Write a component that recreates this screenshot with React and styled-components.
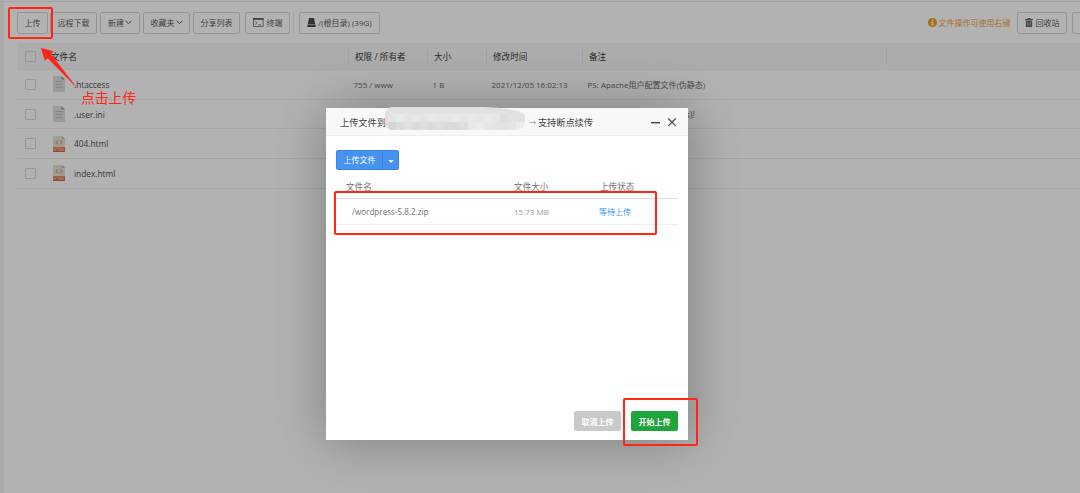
import React from "react";
import styled, { createGlobalStyle } from "styled-components";

const files = [
  {
    name: ".htaccess",
    type: "txt",
    owner: "755 / www",
    size: "1 B",
    time: "2021/12/05 16:02:13",
    note: "PS: Apache用户配置文件(伪静态)",
  },
  { name: ".user.ini", type: "txt", tail: "s)!" },
  { name: "404.html", type: "html" },
  { name: "index.html", type: "html" },
];

const mosaic = [
  "#e5e5e5", "#e9e9e9", "#e4e4e4", "#e7e7e7", "#e4e4e4", "#e8e8e8", "#e6e6e6", "#e6e6e6", "#e9e9e9", "#e5e5e5", "#e8e8e8", "#e6e6e6", "#e9e9e9", "#e5e5e5", "#dedede", "#e3e3e3", "#e2e2e2",
  "#d6d6d6", "#dcdcdc", "#e1e1e1", "#dcdcdc", "#dfdfdf", "#dbdbdb", "#dddddd", "#dadada", "#dadada", "#dddddd", "#e9e9e9", "#ebebeb", "#e6e6e6", "#e4e4e4", "#e2e2e2", "#e5e5e5", "#ebebeb",
];

const Chevron = () => (
  <svg width="7" height="5" viewBox="0 0 7 5" fill="none" stroke="#555" strokeWidth="1">
    <path d="M0.6 0.8 3.5 3.7 6.4 0.8" />
  </svg>
);

const TerminalIcon = () => (
  <svg width="11" height="9" viewBox="0 0 11 9" fill="none" stroke="#555">
    <rect x="0.5" y="0.5" width="9.6" height="8" strokeWidth="0.7" />
    <path d="M0.2 1h10.2" strokeWidth="1.6" />
    <path d="M2.2 3.2 4 4.8 2.2 6.4M5 6.8h3" strokeWidth="0.7" />
  </svg>
);

const DiskIcon = () => (
  <svg width="9" height="9" viewBox="0 0 9 9" fill="#4a4a4a">
    <path d="M2 0h5l1.2 6H0.8zM0.4 6.5h8.2V9H0.4z" />
  </svg>
);

const InfoIcon = () => (
  <svg width="9" height="9" viewBox="0 0 9 9">
    <circle cx="4.5" cy="4.5" r="4.5" fill="#f39c1f" />
    <path d="M3.8 1.5h1.5v1.3H3.8zM3.2 3.6h2.1v2.8h.7v.9H3.1v-.9h.7V4.5h-.6z" fill="#fff" />
  </svg>
);

const TrashIcon = () => (
  <svg width="8" height="9" viewBox="0 0 8 9" fill="#6a6a6a">
    <path d="M2.5 0h3v1H8v1H0V1h2.5zM0.8 2.5h6.4V9H0.8z" />
    <path d="M2.8 3.8v4M5.2 3.8v4" stroke="#ccc" strokeWidth="0.7" />
  </svg>
);

const FileIcon = ({ type }) =>
  type === "html" ? (
    <svg width="12" height="16" viewBox="0 0 12 16">
      <path d="M0 0h9l3 3v13H0z" fill="#e3e1d3" />
      <path d="M9 0l3 3H9z" fill="#b9b6a8" />
      <path d="M4.7 4.5 2.9 6.3l1.8 1.8M7.3 4.5l1.8 1.8-1.8 1.8" fill="none" stroke="#e3794f" strokeWidth="1" />
      <path d="M0 11.3h12V16H0z" fill="#e0673a" />
      <text x="6" y="15.1" textAnchor="middle" fontSize="4.2" fontWeight="700" fontFamily="Open Sans, sans-serif" fill="#f3bfa8">
        HTML
      </text>
    </svg>
  ) : (
    <svg width="12" height="16" viewBox="0 0 12 16">
      <path d="M0 0h8.5L12 3.5V16H0z" fill="#dedede" />
      <path d="M8.5 0 12 3.5H8.5z" fill="#9a9a9a" />
      <path d="M2.5 5.5h7M2.5 8.5h7M2.5 11.5h7" stroke="#bcbcbc" strokeWidth="1" />
    </svg>
  );

const App = () => {
  return (
    <Page>
      <GlobalStyle />
      <Main>
        <Toolbar>
          <ToolButton $w={31} $mr={2}>上传</ToolButton>
          <ToolButton $w={47} $mr={3}>远程下载</ToolButton>
          <ToolButton $w={40} $mr={3}>新建<Chevron /></ToolButton>
          <ToolButton $w={47} $mr={3}>收藏夹<Chevron /></ToolButton>
          <ToolButton $w={47} $mr={5}>分享列表</ToolButton>
          <ToolButton $w={45} $mr={3} $gap={3}><TerminalIcon />终端</ToolButton>
          <Divider />
          <ToolButton $w={81} $gap={2}><DiskIcon />/(根目录) (39G)</ToolButton>
          <Tip><InfoIcon />文件操作可使用右键</Tip>
          <ToolButton $w={50} $mr={5} $gap={3}><TrashIcon />回收站</ToolButton>
          <ToolButton $w={30} />
        </Toolbar>
        <HeadRow>
          <Check />
          <HeadCell $first>文件名</HeadCell>
          <HeadCell $line>权限 / 所有者</HeadCell>
          <HeadCell $line>大小</HeadCell>
          <HeadCell $line>修改时间</HeadCell>
          <HeadCell $line>备注</HeadCell>
          <HeadCell $line />
        </HeadRow>
        {files.map((file) => (
          <FileRow key={file.name}>
            <Check />
            <NameCell>
              <FileIcon type={file.type} />
              {file.name}
            </NameCell>
            <Cell>{file.owner}</Cell>
            <Cell>{file.size}</Cell>
            <Cell>{file.time}</Cell>
            <Cell $tail={file.tail}>{file.note || file.tail}</Cell>
          </FileRow>
        ))}
      </Main>

      <Overlay />
      <Dialog>
        <DialogHead>
          <span>上传文件到</span>
          <Arrow>→</Arrow>
          <span>支持断点续传</span>
          <WindowIcons width="27" height="10" viewBox="0 0 27 10" fill="none" stroke="#4c4c58">
            <path d="M0 5.7h9" strokeWidth="1.5" />
            <path d="M17.3 1.5l7.4 7.4M24.7 1.5l-7.4 7.4" strokeWidth="1.3" />
          </WindowIcons>
        </DialogHead>
        <Redacted>
          {mosaic.map((color, i) => (
            <Block key={i} $color={color} />
          ))}
        </Redacted>
        <DialogBody>
          <UploadGroup>
            <UploadButton>上传文件</UploadButton>
            <UploadMore>
              <svg width="6" height="3" viewBox="0 0 6 3" fill="#fff">
                <path d="M0.4 0h5.2L3 3z" />
              </svg>
            </UploadMore>
          </UploadGroup>
          <UploadHead>
            <span>文件名</span>
            <span>文件大小</span>
            <span>上传状态</span>
          </UploadHead>
          <UploadRow>
            <ZipName>/wordpress-5.8.2.zip</ZipName>
            <ZipSize>15.73 MB</ZipSize>
            <Status>等待上传</Status>
          </UploadRow>
        </DialogBody>
        <DialogFoot>
          <FootButton $color="#c9c9c9">取消上传</FootButton>
          <FootButton $color="#20a53a">开始上传</FootButton>
        </DialogFoot>
      </Dialog>

      <Mark $x={8} $y={7} $w={45} $h={32} />
      <Mark $x={334} $y={191} $w={323} $h={44} />
      <Mark $x={623} $y={398} $w={75} $h={48} />
      <Pointer width="40" height="44" viewBox="0 0 40 44">
        <path d="M1 0 13.5 3.3 11.2 6.2 38 41 7.6 10.2 4.8 12.8z" fill="#ff2517" />
      </Pointer>
      <Caption>点击上传</Caption>
    </Page>
  );
};

const GlobalStyle = createGlobalStyle`
  * {
    box-sizing: border-box;
  }

  body {
    margin: 0;
    overflow: hidden;
    font-family: "Open Sans", "Noto Sans CJK SC", sans-serif;
    font-size: 8px;
    color: #555;
  }

  svg {
    flex-shrink: 0;
  }
`;

const Page = styled.div`
  position: relative;
  width: 1080px;
  height: 493px;
  padding-left: 4px;
  overflow: hidden;
  background: #f3f3f3;
`;

const Main = styled.div`
  height: 493px;
  padding: 11px 0 0 13px;
  background: #fff linear-gradient(#eaeaea, #eaeaea) 0 1px / 100% 1px no-repeat;
`;

const Toolbar = styled.div`
  display: flex;
  align-items: center;
  height: 23px;
  margin-bottom: 9px;
  overflow: hidden;
`;

const ToolButton = styled.button`
  display: flex;
  flex-shrink: 0;
  align-items: center;
  justify-content: center;
  gap: ${({ $gap }) => $gap || 1}px;
  width: ${({ $w }) => $w}px;
  height: 22px;
  margin-right: ${({ $mr }) => $mr || 0}px;
  padding: 0;
  border: 1px solid #d6d6d6;
  border-radius: 2px;
  background: #fff;
  color: #5c5c5c;
  font: inherit;
  line-height: 12px;
  white-space: nowrap;
`;

const Divider = styled.div`
  width: 1px;
  height: 20px;
  margin-right: 5px;
  background: #ededed;
`;

const Tip = styled.div`
  display: flex;
  align-items: center;
  gap: 2px;
  margin-left: auto;
  margin-right: 6.5px;
  color: #f0a03c;
  white-space: nowrap;

  & ~ ${ToolButton}:last-child {
    margin-right: -22px;
  }
`;

const HeadRow = styled.div`
  display: grid;
  grid-template-columns: 33px 298px 79px 59px 96px 304px 1fr;
  align-items: center;
  height: 27px;
  background: #f6f6f6;
  border-bottom: 1px solid #eeeeee;
`;

const FileRow = styled(HeadRow)`
  height: 29.7px;
  background: #fff;
`;

const Check = styled.div`
  width: 11px;
  height: 11px;
  margin-left: 8px;
  border: 1px solid #d8d8d8;
  border-radius: 1px;
`;

const HeadCell = styled.div`
  height: 17px;
  padding-left: ${({ $first }) => ($first ? 1 : 6)}px;
  border-left: ${({ $line }) => ($line ? "1px solid #e8e8e8" : "none")};
  color: #3c3c3c;
  font-size: 8.6px;
  line-height: 18px;
`;

const NameCell = styled.div`
  display: flex;
  align-items: center;
  gap: 9px;
  padding-left: 3px;
  color: #505050;
  font-size: 8.3px;
`;

const Cell = styled.div`
  padding-left: ${({ $tail }) => ($tail ? 103.5 : 5.5)}px;
  color: #6c6c6c;
  font-size: ${({ $tail }) => ($tail ? 9 : 8)}px;
  white-space: nowrap;
`;

const Overlay = styled.div`
  position: absolute;
  inset: 0;
  background: rgba(0, 0, 0, 0.3);
`;

const Dialog = styled.div`
  position: absolute;
  left: 326px;
  top: 108px;
  display: flex;
  flex-direction: column;
  width: 362px;
  height: 332px;
  background: #fff;
  box-shadow: 1px 1px 50px rgba(0, 0, 0, 0.3);
`;

const DialogHead = styled.div`
  display: flex;
  align-items: center;
  height: 28px;
  padding: 0 10px 0 14px;
  border-bottom: 1px solid #eee;
  background: #f8f8f8;
  color: #444;
  font-size: 9.2px;
`;

const Arrow = styled.span`
  margin-left: auto;
  margin-right: 2px;
  color: #888;
  font-size: 7px;
`;

const WindowIcons = styled.svg`
  margin-left: 58px;
`;

const Redacted = styled.div`
  position: absolute;
  left: 59px;
  top: -1px;
  display: grid;
  grid-template-columns: repeat(17, 8px);
  grid-template-rows: 8px 8px;
  width: 140px;
  height: 23px;
  padding: 7px 3px 0;
  overflow: hidden;
  background: #e1e1e1;
  border-radius: 8px 45px 10px 8px / 8px 9px 9px 8px;
`;

const Block = styled.div`
  background: ${({ $color }) => $color};
`;

const DialogBody = styled.div`
  flex: 1;
  padding: 14px 10px 0;
`;

const UploadGroup = styled.div`
  display: flex;
  width: 63px;
  height: 20px;
  border: 1px solid #3b86dc;
  border-radius: 2px;
  background: #4592f0;
  color: #fff;
  line-height: 18px;
`;

const UploadButton = styled.div`
  width: 46px;
  border-right: 1px solid #3b82d4;
  text-align: center;
`;

const UploadMore = styled.div`
  display: flex;
  flex: 1;
  align-items: center;
  justify-content: center;
  padding-top: 2px;
`;

const UploadHead = styled.div`
  display: grid;
  grid-template-columns: 168px 86px 1fr;
  height: 29px;
  padding: 8px 0 0 10px;
  border-bottom: 1px solid #ddd;
  color: #707070;
  font-size: 8.6px;
  line-height: 18px;
`;

const UploadRow = styled.div`
  display: grid;
  grid-template-columns: 162px 85px 1fr;
  align-items: center;
  height: 26px;
  padding-left: 16px;
  border-bottom: 1px solid #eee;
`;

const ZipName = styled.span`
  color: #707070;
  font-size: 8.1px;
`;

const ZipSize = styled.span`
  color: #999;
`;

const Status = styled.span`
  color: #3498f5;
`;

const DialogFoot = styled.div`
  display: flex;
  justify-content: flex-end;
  gap: 10px;
  padding: 0 10px 9px 0;
`;

const FootButton = styled.button`
  width: 47px;
  height: 20px;
  padding: 0;
  border: 0;
  border-radius: 2px;
  background: ${({ $color }) => $color};
  color: #fff;
  font: inherit;
  font-weight: 700;
`;

const Mark = styled.div`
  position: absolute;
  left: ${({ $x }) => $x}px;
  top: ${({ $y }) => $y}px;
  width: ${({ $w }) => $w}px;
  height: ${({ $h }) => $h}px;
  border: 2px solid #ff2517;
  border-radius: 2px;
`;

const Pointer = styled.svg`
  position: absolute;
  left: 40px;
  top: 48px;
`;

const Caption = styled.div`
  position: absolute;
  left: 81px;
  top: 88px;
  color: #ff2517;
  font-size: 13.8px;
  line-height: 20px;
`;

export default App;
